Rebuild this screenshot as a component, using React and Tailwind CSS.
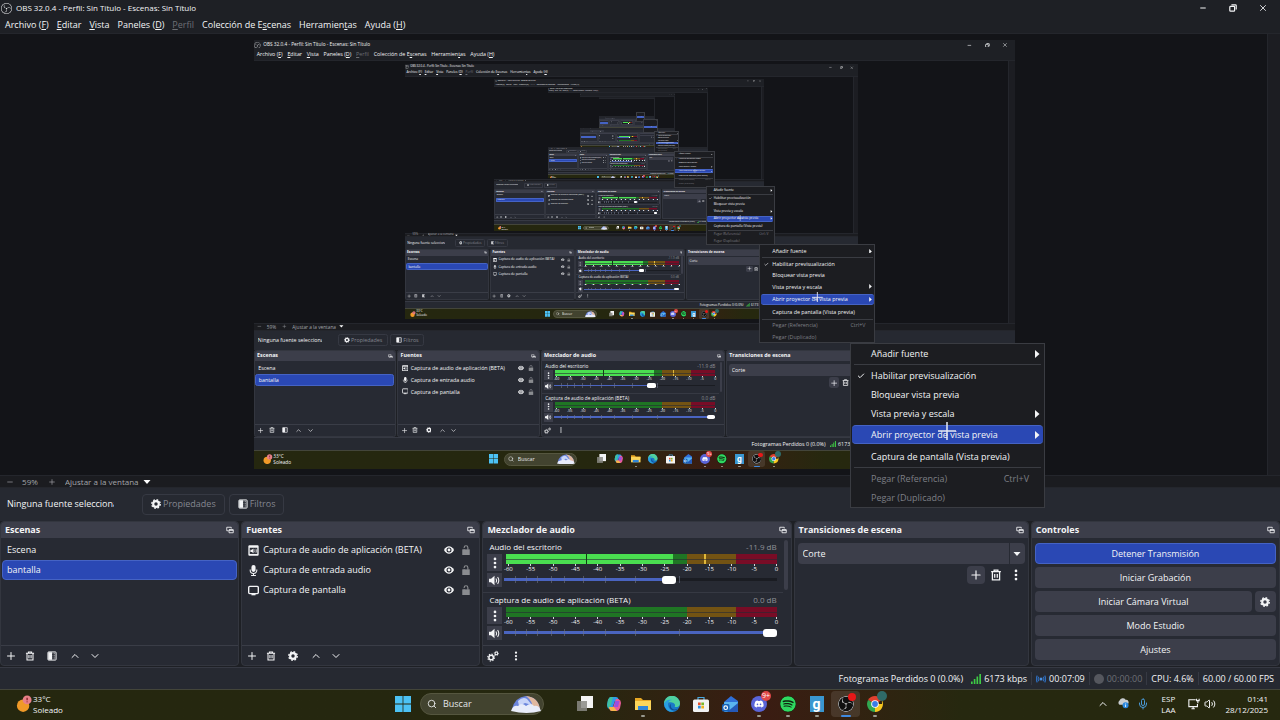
import { useId } from "react";
import { FaDiscord, FaSpotify } from "react-icons/fa";
import { SiObsstudio } from "react-icons/si";
import {
    Check,
    ChevronDown,
    ChevronUp,
    Mic,
    Minus,
    Plus,
    Search,
    Volume2,
    X,
} from "lucide-react";

const MAX_DEPTH = 6;

const menus = [
    { before: "Archivo (", key: "F", after: ")" },
    { before: "", key: "E", after: "ditar" },
    { before: "", key: "V", after: "ista" },
    { before: "Paneles (", key: "D", after: ")" },
    { before: "", key: "P", after: "erfil", disabled: true },
    { before: "Colección de E", key: "s", after: "cenas" },
    { before: "Herramien", key: "t", after: "as" },
    { before: "Ayuda (", key: "H", after: ")" },
];

const sources = [
    { name: "Captura de audio de aplicación (BETA)", Icon: AppAudioIcon },
    { name: "Captura de entrada audio", Icon: MicIcon },
    { name: "Captura de pantalla", Icon: ScreenIcon },
];

const channels = [
    { name: "Audio del escritorio", db: "-11.9 dB", volume: 61, level: 62, peak: 73.5, hold: 30 },
    { name: "Captura de audio de aplicación (BETA)", db: "0.0 dB", volume: 100, level: 0 },
];

const meterScale = ["-60", "-55", "-50", "-45", "-40", "-35", "-30", "-25", "-20", "-15", "-10", "-5", "0"];
const faderTicks = [4, 8, 12, 17, 22, 29, 37, 48, 64];

/* ---------- Icons ---------- */

function GearIcon({ className }) {
    return (
        <svg viewBox="0 0 16 16" className={className} fill="none" stroke="currentColor">
            <circle cx="8" cy="8" r="4.5" strokeWidth="3.5" />
            <circle cx="8" cy="8" r="6.8" strokeWidth="2.2" strokeDasharray="2.7 2.64" />
        </svg>
    );
}

function GearsIcon({ className }) {
    return (
        <svg viewBox="0 0 16 16" className={className} fill="none" stroke="currentColor">
            <circle cx="5.5" cy="10" r="3" strokeWidth="2" />
            <circle cx="5.5" cy="10" r="4.6" strokeWidth="1.4" strokeDasharray="1.8 1.8" />
            <circle cx="12.5" cy="4.5" r="1.8" strokeWidth="1.4" />
            <circle cx="12.5" cy="4.5" r="2.9" strokeWidth="1" strokeDasharray="1.1 1.17" />
        </svg>
    );
}

function TrashIcon({ className }) {
    return (
        <svg viewBox="0 0 16 16" className={className} fill="none" stroke="currentColor" strokeWidth="1.7">
            <path d="M1.5 3.5h13M5.5 3V1.5h5V3M3.2 3.5v11h9.6v-11M6.3 6.5v5M9.7 6.5v5" />
        </svg>
    );
}

function FilterIcon({ className }) {
    return (
        <svg viewBox="0 0 16 16" className={className}>
            <rect x="1.5" y="1.5" width="13" height="13" rx="1" fill="none" stroke="currentColor" strokeWidth="1.6" />
            <path d="M2 2h6v12H2z" fill="currentColor" />
            <path d="M9.5 3v10M12 3v10" stroke="currentColor" strokeWidth="1" strokeDasharray="1.5 1.5" />
        </svg>
    );
}

function PopoutIcon({ className }) {
    return (
        <svg viewBox="0 0 16 16" className={className} fill="none" stroke="currentColor" strokeWidth="1.7">
            <path d="M5 9.5H1.5v-7h9V5" />
            <path d="M6 7.5h8.5v6H6z" />
            <path d="M6 8.2h8.5" strokeWidth="2.4" />
        </svg>
    );
}

function DotsIcon({ className }) {
    return (
        <svg viewBox="0 0 16 16" className={className} fill="currentColor">
            <circle cx="8" cy="2.6" r="1.8" />
            <circle cx="8" cy="8" r="1.8" />
            <circle cx="8" cy="13.4" r="1.8" />
        </svg>
    );
}

function EyeIcon({ className }) {
    return (
        <svg viewBox="0 0 16 16" className={className}>
            <path d="M0 8c2-4 5-6 8-6s6 2 8 6c-2 4-5 6-8 6s-6-2-8-6z" fill="currentColor" />
            <circle cx="8" cy="8" r="4" fill="#272a33" />
            <circle cx="8" cy="8" r="2.3" fill="currentColor" />
        </svg>
    );
}

function UnlockIcon({ className }) {
    return (
        <svg viewBox="0 0 16 16" className={className}>
            <path d="M2 7h12v9H2z" fill="currentColor" />
            <path d="M5 7.5V4.2a3 3 0 0 1 6 0v3.3" fill="none" stroke="currentColor" strokeWidth="1.8" />
            <path d="M3.5 4.8h3v1.6h-3z" fill="#272a33" />
        </svg>
    );
}

function AppAudioIcon({ className }) {
    return (
        <svg viewBox="0 0 16 16" className={className}>
            <rect x="0.5" y="0.5" width="15" height="15" rx="1.5" fill="currentColor" />
            <path d="M2.5 4h11v9h-11z" fill="#272a33" />
            <path d="M3.5 7h2l2.5-2v7l-2.5-2h-2z" fill="currentColor" />
            <path d="M9.5 6.5q1.5 2 0 4M11.5 5.5q2 3 0 6" fill="none" stroke="currentColor" />
        </svg>
    );
}

function MicIcon({ className }) {
    return (
        <svg viewBox="0 0 16 16" className={className}>
            <rect x="5" y="0" width="6" height="10" rx="3" fill="currentColor" />
            <path
                d="M3.2 6.5V8a4.8 4.3 0 0 0 9.6 0V6.5M8 12.5V15M4.5 15.2h7"
                fill="none"
                stroke="currentColor"
                strokeWidth="1.5"
            />
        </svg>
    );
}

function ScreenIcon({ className }) {
    return (
        <svg viewBox="0 0 16 16" className={className}>
            <rect x="1" y="2" width="14" height="10.5" rx="1.5" fill="none" stroke="currentColor" strokeWidth="2" />
            <path d="M5 13h6v2H5z" fill="currentColor" />
        </svg>
    );
}

function SpeakerIcon({ className }) {
    return (
        <svg viewBox="0 0 16 16" className={className}>
            <path d="M0 5.5h3L8 1v14l-5-4.5H0z" fill="currentColor" />
            <path d="M10 5q2 3 0 6M12.5 3q3.5 5 0 10" fill="none" stroke="currentColor" strokeWidth="1.5" />
        </svg>
    );
}

function Caret({ className }) {
    return (
        <svg viewBox="0 0 8 8" className={className} fill="currentColor">
            <path d="M.5 2h7L4 6z" />
        </svg>
    );
}

function IconButton({ label, className = "", children }) {
    return (
        <button type="button" aria-label={label} className={`flex items-center justify-center ${className}`}>
            {children}
        </button>
    );
}

/* ---------- Window chrome ---------- */

function TitleBar() {
    return (
        <header className="flex h-4 shrink-0 items-center gap-1 pl-px pr-[11px]">
            <SiObsstudio className="size-[11px]" />
            <h1 className="text-[8px] leading-4">OBS 32.0.4 - Perfil: Sin Título - Escenas: Sin Título</h1>
            <div className="ml-auto flex items-center gap-[18px]">
                <IconButton label="Minimizar" className="w-3">
                    <Minus className="size-2" strokeWidth={3} />
                </IconButton>
                <IconButton label="Restaurar" className="w-3">
                    <svg viewBox="0 0 10 10" className="size-2" fill="none" stroke="currentColor" strokeWidth="1.5">
                        <rect x="1" y="3" width="6" height="6" rx="1" />
                        <path d="M3 1h5a1 1 0 0 1 1 1v5" />
                    </svg>
                </IconButton>
                <IconButton label="Cerrar" className="w-3">
                    <X className="size-2.5" />
                </IconButton>
            </div>
        </header>
    );
}

function MenuBar() {
    return (
        <nav className="flex h-[17px] shrink-0 items-center gap-2 px-[5px] text-[9px] leading-4">
            {menus.map((menu) => (
                <button
                    key={menu.before + menu.key}
                    type="button"
                    disabled={menu.disabled}
                    className="whitespace-nowrap disabled:text-[#6d6f75]"
                >
                    {menu.before}
                    <span className="underline">{menu.key}</span>
                    {menu.after}
                </button>
            ))}
        </nav>
    );
}

function Preview({ depth }) {
    return (
        <section className="flex min-h-0 flex-1 border-t border-[#24262c] bg-[#131418] pl-0.5">
            <div className="flex min-w-0 flex-1 items-center justify-center overflow-hidden">
                {/* the captured screen, shown at the zoom of the preview */}
                {depth < MAX_DEPTH && (
                    <div className="h-[720px] w-[1280px] shrink-0 overflow-hidden [zoom:0.595]">
                        <Desktop depth={depth + 1} />
                    </div>
                )}
            </div>
            <div className="w-[13px] shrink-0 border-l border-[#24262c] bg-[#1c1d22]" />
        </section>
    );
}

function ZoomBar() {
    const id = useId();
    return (
        <div className="flex h-[13px] shrink-0 items-center border-y border-[#24262c] bg-[#1b1c20] pl-1.5 text-[8px] leading-[11px] text-[#a3a5aa]">
            <IconButton label="Alejar" className="w-2">
                <Minus className="size-2" />
            </IconButton>
            <span className="w-8 text-center">59%</span>
            <IconButton label="Acercar" className="w-3">
                <Plus className="size-2" />
            </IconButton>
            <label htmlFor={id} className="sr-only">
                Escala
            </label>
            <div className="relative ml-[7px] flex items-center">
                <select id={id} className="w-[88px] appearance-none">
                    <option>Ajustar a la ventana</option>
                </select>
                <Caret className="pointer-events-none absolute right-0.5 size-2 text-white" />
            </div>
        </div>
    );
}

function SourceToolbar() {
    return (
        <div className="flex h-[33px] shrink-0 items-center bg-[#262931] pb-px pl-[7px] text-[9px]">
            <p className="w-[107px] overflow-hidden whitespace-nowrap">Ninguna fuente seleccionada</p>
            <button
                type="button"
                className="ml-7 flex h-[21px] items-center gap-0.5 rounded-sm border border-[#363943] px-2 text-[#858790]"
            >
                <GearIcon className="size-2.5 text-gray-100" />
                Propiedades
            </button>
            <button
                type="button"
                className="ml-1 flex h-[21px] items-center gap-0.5 rounded-sm border border-[#363943] px-2 text-[#858790]"
            >
                <FilterIcon className="size-2.5 text-gray-100" />
                Filtros
            </button>
        </div>
    );
}

/* ---------- Docks ---------- */

function Dock({ title, children }) {
    return (
        <section className="flex min-h-0 min-w-0 flex-col rounded-sm border border-[#33363f] bg-[#272a33]">
            <div className="flex h-4 shrink-0 items-center justify-between rounded-t-sm bg-[#3c3e4a] px-1">
                <h2 className="whitespace-nowrap text-[9px] font-bold leading-4">{title}</h2>
                <IconButton label={`Desacoplar ${title}`}>
                    <PopoutIcon className="size-2" />
                </IconButton>
            </div>
            {children}
        </section>
    );
}

function DockToolbar({ children }) {
    return (
        <div className="mt-auto flex h-5 shrink-0 items-center gap-2 border-t border-[#3a3d47] pl-1">
            {children}
        </div>
    );
}

function ScenesDock() {
    return (
        <Dock title="Escenas">
            <ul className="flex flex-col px-px pt-0.5 text-[9px]">
                <li>
                    <button type="button" className="h-5 w-full px-[5px] text-left">
                        Escena
                    </button>
                </li>
                <li>
                    <button
                        type="button"
                        className="h-5 w-full rounded-sm border border-[#4563c4] bg-[#2a48b4] px-1 text-left"
                    >
                        bantalla
                    </button>
                </li>
            </ul>
            <DockToolbar>
                <IconButton label="Agregar escena">
                    <Plus className="size-3" />
                </IconButton>
                <IconButton label="Eliminar escena">
                    <TrashIcon className="size-2.5" />
                </IconButton>
                <IconButton label="Filtros de escena" className="w-[18px]">
                    <FilterIcon className="size-2.5" />
                </IconButton>
                <IconButton label="Subir escena">
                    <ChevronUp className="size-3" />
                </IconButton>
                <IconButton label="Bajar escena">
                    <ChevronDown className="size-3" />
                </IconButton>
            </DockToolbar>
        </Dock>
    );
}

function SourcesDock() {
    return (
        <Dock title="Fuentes">
            <ul className="flex flex-col pl-1.5 pr-2 pt-0.5 text-[9px]">
                {sources.map(({ name, Icon }) => (
                    <li key={name} className="flex h-5 items-center gap-1">
                        <Icon className="size-[11px] shrink-0" />
                        <span className="flex-1 whitespace-nowrap">{name}</span>
                        <IconButton label={`Mostrar ${name}`}>
                            <EyeIcon className="size-2.5" />
                        </IconButton>
                        <IconButton label={`Bloquear ${name}`} className="ml-[3px] text-[#8a8c90]">
                            <UnlockIcon className="size-2.5" />
                        </IconButton>
                    </li>
                ))}
            </ul>
            <DockToolbar>
                <IconButton label="Agregar fuente">
                    <Plus className="size-3" />
                </IconButton>
                <IconButton label="Eliminar fuente">
                    <TrashIcon className="size-2.5" />
                </IconButton>
                <IconButton label="Propiedades de fuente" className="w-[18px]">
                    <GearIcon className="size-2.5" />
                </IconButton>
                <IconButton label="Subir fuente">
                    <ChevronUp className="size-3" />
                </IconButton>
                <IconButton label="Bajar fuente">
                    <ChevronDown className="size-3" />
                </IconButton>
            </DockToolbar>
        </Dock>
    );
}

function Meter({ level, peak, hold }) {
    return (
        <div className="relative flex h-[10px] bg-[#1f7524]">
            <div className="ml-auto w-[18%] bg-[#735313]" />
            <div className="w-[15%] bg-[#780c26]" />
            {level > 0 && (
                <div className="absolute inset-y-0 left-0 bg-[#4ade50]" style={{ width: `${level}%` }} />
            )}
            {hold && <div className="absolute inset-y-0 w-px bg-[#0f3d12]" style={{ left: `${hold}%` }} />}
            {peak && <div className="absolute inset-y-0 w-0.5 bg-[#e0b83a]" style={{ left: `${peak}%` }} />}
            <div className="absolute inset-y-0 left-0 w-0.5 bg-[#272a33]" />
            <div className="absolute inset-x-0 top-[5px] h-px bg-[#272a33]/60" />
        </div>
    );
}

function Channel({ channel }) {
    const id = useId();
    return (
        <li className="flex h-[53px] flex-col border-b border-[#363943] pl-1 pr-1.5">
            <div className="flex items-center justify-between pl-0.5 text-[8px] leading-[14px]">
                <label htmlFor={id}>{channel.name}</label>
                <output className="text-[#8f9197]">{channel.db}</output>
            </div>
            <div className="flex gap-0.5">
                <div className="flex w-[15px] shrink-0 flex-col gap-0.5">
                    <IconButton label={`Opciones de ${channel.name}`} className="h-[17px] bg-[#3c3e4a]">
                        <DotsIcon className="size-3" />
                    </IconButton>
                    <IconButton label={`Silenciar ${channel.name}`} className="h-3.5 bg-[#3c3e4a]">
                        <SpeakerIcon className="size-[11px]" />
                    </IconButton>
                </div>
                <div className="min-w-0 flex-1">
                    <Meter level={channel.level} peak={channel.peak} hold={channel.hold} />
                    <div className="-mr-1 flex justify-between text-[6px] leading-[7px]">
                        {meterScale.map((mark) => (
                            <span key={mark} className="flex w-2 flex-col items-center">
                                <span className="h-0.5 w-px bg-gray-300" />
                                {mark}
                            </span>
                        ))}
                    </div>
                    <div className="relative flex h-[13px] items-center">
                        <input
                            id={id}
                            type="range"
                            defaultValue={channel.volume}
                            className="h-[3px] w-full appearance-none bg-[#1a1c22] [&::-webkit-slider-thumb]:h-2 [&::-webkit-slider-thumb]:w-3.5 [&::-webkit-slider-thumb]:appearance-none [&::-webkit-slider-thumb]:rounded-[3px] [&::-webkit-slider-thumb]:bg-white"
                            style={{
                                backgroundImage: `linear-gradient(to right, #4a64c0 ${channel.volume}%, transparent ${channel.volume}%)`,
                            }}
                        />
                        {faderTicks.map((tick) => (
                            <span
                                key={tick}
                                className="pointer-events-none absolute h-[7px] w-px bg-[#6d7388]/60"
                                style={{ left: `${tick}%` }}
                            />
                        ))}
                    </div>
                </div>
            </div>
        </li>
    );
}

function MixerDock() {
    return (
        <Dock title="Mezclador de audio">
            <div className="flex min-h-0 flex-1 pt-0.5">
                <ul className="min-w-0 flex-1 overflow-hidden">
                    {channels.map((channel) => (
                        <Channel key={channel.name} channel={channel} />
                    ))}
                </ul>
                <div className="w-2 shrink-0 px-px">
                    <div className="h-[50px] w-1 rounded-sm bg-[#3c3e4a]" />
                </div>
            </div>
            <DockToolbar>
                <IconButton label="Propiedades avanzadas de audio">
                    <GearsIcon className="size-3" />
                </IconButton>
                <IconButton label="Menú del mezclador" className="ml-1">
                    <DotsIcon className="size-2.5" />
                </IconButton>
            </DockToolbar>
        </Dock>
    );
}

function TransitionsDock() {
    const id = useId();
    return (
        <Dock title="Transiciones de escena">
            <div className="flex flex-col px-[3px] pt-[5px] text-[9px]">
                <label htmlFor={id} className="sr-only">
                    Transición
                </label>
                <div className="relative flex items-center">
                    <select id={id} className="h-[21px] w-full appearance-none rounded-sm bg-[#3c3e4a] px-[5px]">
                        <option>Corte</option>
                    </select>
                    <div className="pointer-events-none absolute right-0 flex h-[21px] w-4 items-center justify-center border-l border-[#272a33]">
                        <Caret className="size-2" />
                    </div>
                </div>
                <div className="mt-0.5 flex justify-end gap-0.5">
                    <IconButton label="Agregar transición" className="size-[18px] rounded-sm bg-[#3c3e4a]">
                        <Plus className="size-3.5" />
                    </IconButton>
                    <IconButton label="Eliminar transición" className="size-[18px]">
                        <TrashIcon className="size-3" />
                    </IconButton>
                    <IconButton label="Opciones de transición" className="size-[18px]">
                        <DotsIcon className="size-3" />
                    </IconButton>
                </div>
            </div>
        </Dock>
    );
}

function ControlButton({ children, className = "bg-[#3c3e4a]" }) {
    return (
        <button type="button" className={`h-[21px] flex-1 rounded-sm ${className}`}>
            {children}
        </button>
    );
}

function ControlsDock() {
    return (
        <Dock title="Controles">
            <div className="flex flex-col gap-[3px] px-[3px] pt-[5px] text-[9px]">
                <div className="flex">
                    <ControlButton className="border border-[#4563c4] bg-[#2a48b4]">Detener Transmisión</ControlButton>
                </div>
                <div className="flex">
                    <ControlButton>Iniciar Grabación</ControlButton>
                </div>
                <div className="flex gap-[3px]">
                    <ControlButton>Iniciar Cámara Virtual</ControlButton>
                    <IconButton label="Configurar cámara virtual" className="w-[21px] rounded-sm bg-[#3c3e4a]">
                        <GearIcon className="size-2.5" />
                    </IconButton>
                </div>
                <div className="flex">
                    <ControlButton>Modo Estudio</ControlButton>
                </div>
                <div className="flex">
                    <ControlButton>Ajustes</ControlButton>
                </div>
            </div>
        </Dock>
    );
}

function StatusBar() {
    return (
        <footer className="mt-px flex h-[22px] shrink-0 items-center justify-end whitespace-nowrap border-t border-[#363943] bg-[#262931] pr-1.5 text-[9px]">
            <span className="pr-2">Fotogramas Perdidos 0 (0.0%)</span>
            <span className="flex items-center gap-[3px] border-r border-[#363943] pr-1">
                <svg viewBox="0 0 12 12" className="size-2.5" fill="#3ecb45">
                    <path d="M0 9h2v3H0zM3.3 6h2v6h-2zM6.6 3h2v9h-2zM10 0h2v12h-2z" />
                </svg>
                6173 kbps
            </span>
            <span className="flex items-center gap-[3px] border-r border-[#363943] px-1">
                <svg viewBox="0 0 12 12" className="size-2.5" fill="none" stroke="#2f6fc0" strokeWidth="1.4">
                    <circle cx="6" cy="6" r="1.8" fill="#4a90e2" stroke="none" />
                    <path d="M3.5 3.5q-2 2.5 0 5M8.5 3.5q2 2.5 0 5M1.6 2q-2.4 4 0 8M10.4 2q2.4 4 0 8" />
                </svg>
                00:07:09
            </span>
            <span className="flex items-center gap-[3px] border-r border-[#363943] px-1 text-[#6d6f75]">
                <span className="size-2.5 rounded-full bg-[#55575e]" />
                00:00:00
            </span>
            <span className="border-r border-[#363943] px-1">CPU: 4.6%</span>
            <span className="pl-1">60.00 / 60.00 FPS</span>
        </footer>
    );
}

/* ---------- Context menu ---------- */

function MenuItem({ children, shortcut, checked, submenu, active, disabled }) {
    return (
        <button
            type="button"
            role="menuitem"
            disabled={disabled}
            className={`relative flex h-[19px] w-full items-center justify-between whitespace-nowrap rounded-sm pl-[19px] text-left disabled:text-[#7d7f85] ${
                submenu ? "pr-0.5" : "pr-3.5"
            } ${active ? "mb-[3px] mt-0.5 border-y border-[#4563c4] bg-[#2a48b4]" : ""}`}
        >
            {checked && <Check className="absolute left-[5px] size-2" strokeWidth={3} />}
            <span>{children}</span>
            {shortcut && <span>{shortcut}</span>}
            {submenu && (
                <svg viewBox="0 0 8 8" className="size-2" fill="currentColor">
                    <path d="M2 0v8l4.5-4z" />
                </svg>
            )}
        </button>
    );
}

function ContextMenu() {
    return (
        <div
            role="menu"
            className="absolute left-[850px] top-[343px] w-[195px] border border-[#3a3c42] bg-[#1c1d21] px-px text-[9px]"
        >
            <MenuItem submenu>Añadir fuente</MenuItem>
            <div className="mx-0.5 my-px h-px bg-[#3a3c42]" />
            <MenuItem checked>Habilitar previsualización</MenuItem>
            <MenuItem>Bloquear vista previa</MenuItem>
            <MenuItem submenu>Vista previa y escala</MenuItem>
            <MenuItem submenu active>
                Abrir proyector de vista previa
            </MenuItem>
            <MenuItem>Captura de pantalla (Vista previa)</MenuItem>
            <div className="mx-0.5 my-px h-px bg-[#3a3c42]" />
            <MenuItem shortcut="Ctrl+V" disabled>
                Pegar (Referencia)
            </MenuItem>
            <MenuItem disabled>Pegar (Duplicado)</MenuItem>
            <svg viewBox="0 0 18 18" className="absolute left-[87px] top-[78px] size-[18px]" stroke="#e8eaf2" strokeWidth="1.5">
                <path d="M9 0v18M0 9h18" />
            </svg>
        </div>
    );
}

/* ---------- Taskbar ---------- */

function TaskIcon({ label, running, active, badge, children }) {
    return (
        <button
            type="button"
            aria-label={label}
            className={`relative flex h-[26px] w-[29px] items-center justify-center rounded-sm ${active ? "bg-white/10" : ""}`}
        >
            {children}
            {badge}
            {running && (
                <span
                    className={
                        active
                            ? "absolute bottom-0 h-0.5 w-2.5 rounded-full bg-[#3f8ae0]"
                            : "absolute bottom-0 h-0.5 w-1 rounded-full bg-[#9a9a90]"
                    }
                />
            )}
        </button>
    );
}

function TaskbarApps() {
    return (
        <div className="flex items-center">
            <TaskIcon label="Vista de tareas">
                <svg viewBox="0 0 16 16" className="size-4">
                    <rect x="4" y="0" width="12" height="12" fill="#f4f4f4" />
                    <rect x="0" y="5" width="10" height="10" fill="#8a8a84" fillOpacity="0.85" />
                </svg>
            </TaskIcon>
            <TaskIcon label="Copilot">
                <svg viewBox="0 0 16 16" className="size-4">
                    <path d="M5 1h5q2 0 2.5 2L13 5H9L6 13H3.5Q1 12 1 9l1-5Q3 1 5 1z" fill="#2f9be8" />
                    <path d="M1.3 8 2 4q1-3 3-3h2L5 9l-2 3.5Q1 11 1.3 8z" fill="#3fc0a0" />
                    <path d="M11 15H6q-2 0-2.5-2L3 11h4l3-8h2.5Q15 4 15 7l-1 5q-1 3-3 3z" fill="#e85a9b" />
                    <path d="M11 15H6q-2 0-2.5-2L3 11h5z" fill="#f5b54a" />
                    <path d="M9 5h4.5L12 11H8z" fill="#9a4fe0" />
                </svg>
            </TaskIcon>
            <TaskIcon label="Explorador de archivos" running>
                <svg viewBox="0 0 16 16" className="size-4">
                    <path d="M0 2h6l2 2h8v4H0z" fill="#e8a824" />
                    <path d="M0 5h16v9H0z" fill="#fbd55a" />
                    <path d="M3 10h10v4H3z" fill="#2f86d8" />
                </svg>
            </TaskIcon>
            <TaskIcon label="Edge">
                <svg viewBox="0 0 16 16" className="size-4">
                    <circle cx="8" cy="8" r="8" fill="#1a78c8" />
                    <path d="M0 8a8 8 0 0 1 16-.5c0 3-3 4-5.5 3.5 1-1 1-4-2.5-4.5C4 6 1 7 0 8z" fill="#4fd0a0" />
                    <path d="M0 8c1-4 5-5 8-4-4 0-5 5-3 8 1 2 3 3 5 3.5A8 8 0 0 1 0 8z" fill="#2a9fe0" />
                    <path d="M7 8c-1 3 1 5.5 4 5.5l3-.8c-3 3-8 1.5-8.5-2C5.5 9 6 8.5 7 8z" fill="#104a90" />
                </svg>
            </TaskIcon>
            <TaskIcon label="Microsoft Store">
                <svg viewBox="0 0 16 16" className="size-4">
                    <path d="M5 4V1.5h6V4" fill="none" stroke="#4aa8e0" strokeWidth="1.2" />
                    <rect x="0" y="3.5" width="16" height="12.5" rx="1.5" fill="#f2f2f2" />
                    <path d="M5 6.5h2.7v2.7H5z" fill="#e8502a" />
                    <path d="M8.3 6.5H11v2.7H8.3z" fill="#7ab82a" />
                    <path d="M5 9.8h2.7v2.7H5z" fill="#2a90e0" />
                    <path d="M8.3 9.8H11v2.7H8.3z" fill="#f0b020" />
                </svg>
            </TaskIcon>
            <TaskIcon label="Outlook">
                <svg viewBox="0 0 16 16" className="size-4">
                    <path d="M2 6 9 0l7 5v3H2z" fill="#2f6fd8" />
                    <path d="M2 7q0-1 1-1h12q1 0 1 1v8q0 1-1 1H3q-1 0-1-1z" fill="#5ab4f0" />
                    <path d="M16 7v8q0 1-1 1H5z" fill="#2458b8" />
                    <rect x="0" y="8" width="7.5" height="7.5" rx="1.5" fill="#1560b8" />
                    <circle cx="3.7" cy="11.7" r="1.8" fill="none" stroke="#fff" strokeWidth="1.2" />
                </svg>
            </TaskIcon>
            <TaskIcon
                label="Discord"
                running
                badge={
                    <span className="absolute right-0.5 top-0 flex size-2.5 items-center justify-center rounded-full bg-[#e04848] text-[7px] leading-none text-white">
                        9+
                    </span>
                }
            >
                <span className="flex size-4 items-center justify-center rounded-full bg-[#5a64d8]">
                    <FaDiscord className="size-2.5 text-white" />
                </span>
            </TaskIcon>
            <TaskIcon label="Spotify" running>
                <FaSpotify className="size-4 rounded-full bg-[#10240f] text-[#2fd860]" />
            </TaskIcon>
            <TaskIcon label="G" running>
                <span className="flex h-4 w-3.5 items-center justify-center bg-[#3a96d0] font-['Roboto',sans-serif] text-[14px] font-bold leading-none text-white">
                    g
                </span>
            </TaskIcon>
            <TaskIcon
                label="OBS Studio"
                running
                active
                badge={<span className="absolute right-1 top-0.5 size-2 rounded-full bg-[#e81818]" />}
            >
                <SiObsstudio className="size-4 rounded-full bg-[#101010] text-[#d0d0d0]" />
            </TaskIcon>
            <TaskIcon
                label="Chrome"
                running
                badge={<span className="absolute right-0.5 top-0 size-2.5 rounded-full bg-[#2f6a68]" />}
            >
                <svg viewBox="0 0 16 16" className="size-4">
                    <path d="M8 8 1.1 4A8 8 0 0 1 14.9 4z" fill="#e0402f" />
                    <path d="M8 8 1.1 4A8 8 0 0 0 8 16z" fill="#30a850" />
                    <path d="M8 8h7q0-2-.1-4A8 8 0 0 1 8 16z" fill="#f8c820" />
                    <circle cx="8" cy="8" r="3.8" fill="#fff" />
                    <circle cx="8" cy="8" r="2.9" fill="#3a7ce8" />
                </svg>
            </TaskIcon>
        </div>
    );
}

function Taskbar() {
    const id = useId();
    return (
        <div className="grid h-[31px] shrink-0 grid-cols-[1fr_auto_1fr] items-center border-t border-[#43453a] bg-linear-to-r from-[#25270f] from-45% via-[#3a1c12] via-60% to-[#26280f] to-75% pb-[3px] pl-4 pr-3 text-[8px] leading-[11px]">
            <div className="flex items-center gap-px">
                <svg viewBox="0 0 18 20" className="w-4">
                    <circle cx="8" cy="12" r="7" fill="#f09a28" />
                    <circle cx="12.5" cy="5.5" r="5" fill="#e88088" />
                    <path d="M12.5 3v3M12.5 7.3v1" stroke="#7a1820" strokeWidth="1.4" />
                </svg>
                <p>
                    33°C
                    <br />
                    Soleado
                </p>
            </div>
            <div className="flex items-center">
                <button type="button" aria-label="Inicio" className="mr-[9px]">
                    <svg viewBox="0 0 16 16" className="size-4" fill="#4cc2f4">
                        <path d="M0 0h7.6v7.6H0zM8.4 0H16v7.6H8.4zM0 8.4h7.6V16H0zM8.4 8.4H16V16H8.4z" />
                    </svg>
                </button>
                <div className="mr-[26px] flex h-[22px] w-[124px] items-center gap-1.5 rounded-full border border-[#55563f] bg-[#42432f] pl-1.5">
                    <Search className="size-2.5 shrink-0" />
                    <label htmlFor={id} className="sr-only">
                        Buscar
                    </label>
                    <input
                        id={id}
                        type="search"
                        placeholder="Buscar"
                        className="min-w-0 flex-1 text-[9px] placeholder:text-gray-200"
                    />
                    <svg viewBox="0 0 30 18" className="mr-0.5 h-[18px] w-[30px] shrink-0">
                        <path d="M1 14Q4 2 15 1q12 1 14 13z" fill="#6a84dc" />
                        <path d="M15 1q12 1 14 13h-8q2-7-6-13z" fill="#e0b8a0" />
                        <path d="M7 6q5-5 9-2l5 6-7-2-6 3z" fill="#c8d4f8" />
                        <path d="M0 16q2-6 7-5 4-4 8 0 5-4 8 0 5-1 7 5-14 4-30 0z" fill="#e8ecfa" />
                    </svg>
                </div>
                <TaskbarApps />
            </div>
            <div className="flex items-center justify-end gap-2">
                <ChevronUp className="size-3" />
                <svg viewBox="0 0 14 12" className="w-3">
                    <path d="M3 8a3 3 0 0 1 0-5 4 4 0 0 1 7-1 3 3 0 0 1 1 6z" fill="#c8ccd0" />
                    <circle cx="10" cy="8.5" r="3.5" fill="#2a88e0" />
                    <path d="M10 6.5v1M10 8v2.5" stroke="#fff" />
                </svg>
                <Mic className="size-3 text-[#4a9ad8]" />
                <p className="mx-1 text-center">
                    ESP
                    <br />
                    LAA
                </p>
                <div className="flex items-center gap-1">
                    <svg viewBox="0 0 14 14" className="size-3" fill="none" stroke="currentColor" strokeWidth="1.3">
                        <path d="M9 2H1v8h10V7M4 12.5h4M6 10v2" />
                        <path d="M10 1v2h3V1M11.5 3v3" />
                    </svg>
                    <Volume2 className="size-3" />
                </div>
                <p className="ml-0.5 text-right">
                    01:41
                    <br />
                    28/12/2025
                </p>
            </div>
        </div>
    );
}

/* The whole screen: the OBS window, its open menu and the Windows taskbar. */
function Desktop({ depth }) {
    return (
        <div className="relative flex h-full flex-col overflow-hidden bg-[#1e2025] font-['Open_Sans',sans-serif] text-gray-100">
            <TitleBar />
            <MenuBar />
            <Preview depth={depth} />
            <ZoomBar />
            <SourceToolbar />
            <main className="grid h-[145px] shrink-0 grid-cols-[239fr_239fr_309fr_235fr_249fr] grid-rows-1 gap-[2px]">
                <ScenesDock />
                <SourcesDock />
                <MixerDock />
                <TransitionsDock />
                <ControlsDock />
            </main>
            <StatusBar />
            <Taskbar />
            <ContextMenu />
        </div>
    );
}

export default function App() {
    return (
        <div className="h-screen">
            <Desktop depth={0} />
        </div>
    );
}
